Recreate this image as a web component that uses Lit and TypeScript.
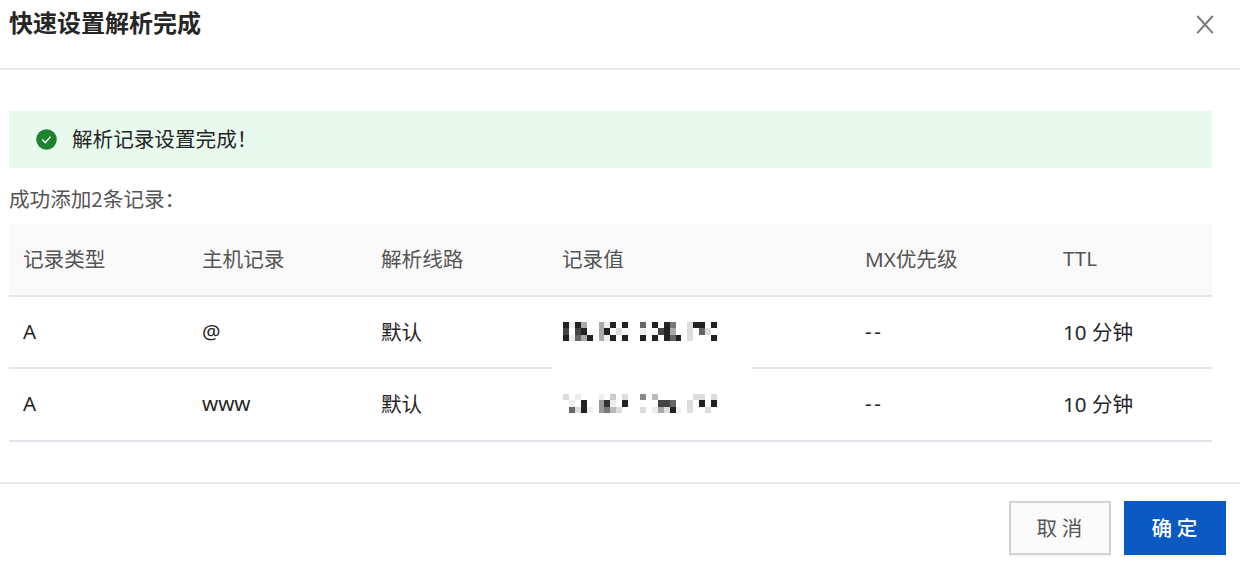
import { LitElement, html, svg, css } from 'lit';
import { customElement, property } from 'lit/decorators.js';

interface DnsRecord {
  type: string;
  host: string;
  line: string;
  mask: string[];
  mx: string;
  ttl: string;
}

const RECORDS: DnsRecord[] = [
  {
    type: 'A',
    host: '@',
    line: '默认',
    mask: [
      '2e2affae2f2ff6f2f27ffd22f2',
      '4f42ffa2fdfffeff42affdf6df',
      '2e6a2fae2f2ff2f2f262fdfff2',
    ],
    mx: '--',
    ttl: '10 分钟',
  },
  {
    type: 'A',
    host: 'www',
    line: '默认',
    mask: [
      'dfefffefcfdff8fbffffffddfd',
      'fef2ff93ef2fffff446ffdf2f2',
      'f6d2ef97bdfffdfead2efdffdf',
    ],
    mx: '--',
    ttl: '10 分钟',
  },
];

/* Pixelated value; each hex digit is the grey level of one cell. */
@customElement('masked-value')
class MaskedValue extends LitElement {
  static styles = css`
    :host {
      display: block;
      line-height: 0;
    }
  `;

  @property({ type: Array })
  rows: string[] = [];

  render() {
    return html`
      <svg width="154" height="19" viewBox="0 0 26 3" preserveAspectRatio="none" shape-rendering="crispEdges">
        ${this.rows.map((row, y) => [...row].map((c, x) => c === 'f' ? null : svg`
          <rect x=${x} y=${y} width="1" height="1" fill="#${c.repeat(6)}"></rect>`))}
      </svg>
    `;
  }
}

@customElement('app-root')
class AppRoot extends LitElement {
  static styles = css`
    :host {
      display: block;
      font-family: 'Noto Sans', 'Noto Sans CJK SC', sans-serif;
      font-size: 20.6px;
      color: #262626;
    }
    .dialog {
      display: flex;
      flex-direction: column;
      box-sizing: border-box;
      height: 566px;
      background: #fff;
      overflow: hidden;
    }
    .header {
      display: flex;
      justify-content: space-between;
      box-sizing: border-box;
      height: 70px;
      padding: 7px 26px 0 9px;
      border-bottom: 2px solid #e3e8ed;
    }
    .title {
      margin: 0;
      font-family: 'Noto Sans CJK SC', sans-serif;
      font-size: 24px;
      line-height: 30px;
      font-weight: 700;
    }
    .close {
      margin-top: 8px;
    }
    .body {
      box-sizing: border-box;
      height: 412px;
      padding: 41px 28px 0 9px;
    }
    .alert {
      display: flex;
      align-items: center;
      gap: 15px;
      height: 57px;
      padding-left: 27px;
      background: #e8faee;
      font-family: 'Noto Sans CJK SC', sans-serif;
    }
    .alert-text {
      padding-bottom: 4px;
    }
    .summary {
      height: 56px;
      line-height: 61px;
      color: #555;
      font-family: 'Noto Sans CJK SC', sans-serif;
    }
    .row {
      display: grid;
      grid-template-columns: 179px 179px 181px 303px 198px 1fr;
      align-items: center;
      box-sizing: border-box;
      height: 73px;
      padding-left: 14px;
      border-bottom: 2px solid #e0e6ec;
    }
    .cell {
      padding-bottom: 3px;
    }
    .mx {
      letter-spacing: 2.5px;
    }
    .head {
      background: #f9f9f9;
      color: #555;
    }
    .head + .row {
      height: 72px;
    }
    .cover {
      align-self: stretch;
      display: flex;
      align-items: center;
      width: 200px;
      margin: 0 0 -2px -10px;
      padding: 0 0 3px 11px;
      box-sizing: border-box;
      background: #fff;
    }
    .row:last-child .cover {
      margin-bottom: 0;
      padding-bottom: 2px;
    }
    .footer {
      display: flex;
      justify-content: flex-end;
      gap: 13px;
      box-sizing: border-box;
      height: 84px;
      padding: 17px 14px 0 0;
      border-top: 2px solid #e3e8ed;
    }
    .btn {
      box-sizing: border-box;
      width: 102px;
      height: 54px;
      padding: 0 1px 2px 0;
      border: 2px solid #d2d2d2;
      background: #fafafa;
      color: #555;
      font: 20.6px 'Noto Sans CJK SC', sans-serif;
      box-shadow: 0 2px 1px #f8f8f8;
    }
    .primary {
      border-color: #0b59c3;
      background: #0b59c3;
      color: #fff;
      font-weight: 500;
    }
  `;

  private renderRecord(record: DnsRecord) {
    return html`
      <div class="row">
        <span class="cell">${record.type}</span>
        <span class="cell">${record.host}</span>
        <span class="cell">${record.line}</span>
        <span class="cover"><masked-value .rows=${record.mask}></masked-value></span>
        <span class="cell mx">${record.mx}</span>
        <span class="cell">${record.ttl}</span>
      </div>
    `;
  }

  render() {
    return html`
      <div class="dialog">
        <div class="header">
          <h1 class="title">快速设置解析完成</h1>
          <svg class="close" width="18" height="20" viewBox="0 0 18 20" fill="none" stroke="#777" stroke-width="1.9">
            <path d="M1.3 1L16.7 18.2M16.7 1L1.3 18.2"></path>
          </svg>
        </div>
        <div class="body">
          <div class="alert">
            <svg width="21" height="21" viewBox="0 0 21 21">
              <circle cx="10.5" cy="10.5" r="10.3" fill="#1e8230"></circle>
              <path d="M6.3 10.6l3 3 5.2-6" fill="none" stroke="#fff" stroke-width="1.4"></path>
            </svg>
            <span class="alert-text">解析记录设置完成！</span>
          </div>
          <div class="summary">成功添加2条记录：</div>
          <div>
            <div class="row head">
              <span class="cell">记录类型</span>
              <span class="cell">主机记录</span>
              <span class="cell">解析线路</span>
              <span class="cell">记录值</span>
              <span class="cell">MX优先级</span>
              <span class="cell">TTL</span>
            </div>
            ${RECORDS.map((record) => this.renderRecord(record))}
          </div>
        </div>
        <div class="footer">
          <button class="btn">取 消</button>
          <button class="btn primary">确 定</button>
        </div>
      </div>
    `;
  }
}
